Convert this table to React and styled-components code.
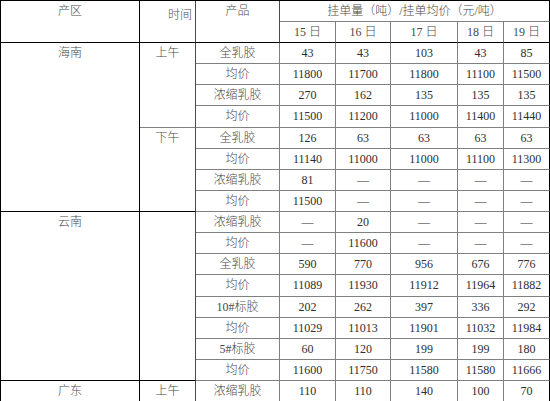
import React from "react";
import styled, { createGlobalStyle, css } from "styled-components";

const BLACK = "#000";
const DARK = "#4a4a4a";
const GRAY = "#808080";

const GlobalStyle = createGlobalStyle`
  html, body { margin: 0; padding: 0; background: #fff; }
  body { font-family: "Liberation Serif", "Noto Sans CJK SC", serif; }
`;

const Table = styled.table`
  border-collapse: separate;
  border-spacing: 0;
  table-layout: fixed;
  width: 550px;
  border-top: 1px solid ${BLACK};
  border-left: 1px solid ${BLACK};
  font-family: "Liberation Serif", "Noto Sans CJK SC", serif;
  font-size: 12px;
  color: #333;
`;

const Col = styled.col`
  width: ${(p) => p.$w}px;
`;

const Row = styled.tr`
  height: ${(p) => p.$h}px;
`;

const cellBase = css`
  padding: 0;
  border-right: 1px solid ${(p) => p.$r || GRAY};
  border-bottom: 1px solid ${(p) => p.$b || GRAY};
  text-align: center;
  vertical-align: middle;
  line-height: 20px;
  white-space: nowrap;
  overflow: hidden;
`;

const cjkText = css`
  color: #4a4a4a;
  font-weight: 300;
`;

const HeadCell = styled.th`
  ${cellBase};
  ${cjkText};
  vertical-align: ${(p) => (p.$top ? "top" : "middle")};
  text-align: ${(p) => p.$align || "center"};
  padding-top: ${(p) => p.$pt || 0}px;
  padding-right: ${(p) => p.$pr || 0}px;
`;

const RegionCell = styled.td`
  ${cellBase};
  ${cjkText};
  vertical-align: top;
`;

const TimeCell = styled.td`
  ${cellBase};
  ${cjkText};
  vertical-align: top;
`;

const ProductCell = styled.td`
  ${cellBase};
  ${cjkText};
`;

const ValueCell = styled.td`
  ${cellBase};
  color: #2e2e2e;
`;

const D = "—";

const regions = [
  {
    name: "海南",
    times: [
      {
        name: "上午",
        rows: [
          ["全乳胶", "43", "43", "103", "43", "85"],
          ["均价", "11800", "11700", "11800", "11100", "11500"],
          ["浓缩乳胶", "270", "162", "135", "135", "135"],
          ["均价", "11500", "11200", "11000", "11400", "11440"],
        ],
      },
      {
        name: "下午",
        rows: [
          ["全乳胶", "126", "63", "63", "63", "63"],
          ["均价", "11140", "11000", "11000", "11100", "11300"],
          ["浓缩乳胶", "81", D, D, D, D],
          ["均价", "11500", D, D, D, D],
        ],
      },
    ],
  },
  {
    name: "云南",
    times: [
      {
        name: "",
        rows: [
          ["浓缩乳胶", D, "20", D, D, D],
          ["均价", D, "11600", D, D, D],
          ["全乳胶", "590", "770", "956", "676", "776"],
          ["均价", "11089", "11930", "11912", "11964", "11882"],
          ["10#标胶", "202", "262", "397", "336", "292"],
          ["均价", "11029", "11013", "11901", "11032", "11984"],
          ["5#标胶", "60", "120", "199", "199", "180"],
          ["均价", "11600", "11750", "11580", "11580", "11666"],
        ],
      },
    ],
  },
  {
    name: "广东",
    times: [
      {
        name: "上午",
        rows: [["浓缩乳胶", "110", "110", "140", "100", "70"]],
      },
    ],
  },
];

const widths = [139, 56, 84, 56, 55, 67, 46, 46];
const days = ["15 日", "16 日", "17 日", "18 日", "19 日"];

function Body() {
  const out = [];
  regions.forEach((region) => {
    const total = region.times.reduce((s, t) => s + t.rows.length, 0);
    region.times.forEach((time, ti) => {
      time.rows.forEach((row, ri) => {
        const firstOfRegion = ti === 0 && ri === 0;
        const lastTime = ti === region.times.length - 1;
        out.push(
          <Row $h={21.125} key={`${region.name}-${ti}-${ri}`}>
            {firstOfRegion && (
              <RegionCell rowSpan={total} $r={BLACK} $b={BLACK}>
                {region.name}
              </RegionCell>
            )}
            {ri === 0 && (
              <TimeCell
                rowSpan={time.rows.length}
                $r={DARK}
                $b={lastTime ? BLACK : GRAY}
              >
                {time.name}
              </TimeCell>
            )}
            <ProductCell>{row[0]}</ProductCell>
            {row.slice(1).map((v, i) => (
              <ValueCell key={i} $r={i === 4 ? BLACK : GRAY}>
                {v}
              </ValueCell>
            ))}
          </Row>
        );
      });
    });
  });
  return <tbody>{out}</tbody>;
}

export default function App() {
  return (
    <>
      <GlobalStyle />
      <Table>
        <colgroup>
          {widths.map((w, i) => (
            <Col key={i} $w={w} />
          ))}
        </colgroup>
        <thead>
          <Row $h={21}>
            <HeadCell rowSpan={2} $top $r={BLACK} $b={BLACK}>
              产区
            </HeadCell>
            <HeadCell rowSpan={2} $top $pt={4} $pr={3} $align="right" $r={DARK} $b={BLACK}>
              时间
            </HeadCell>
            <HeadCell rowSpan={2} $top $r={DARK} $b={BLACK}>
              产品
            </HeadCell>
            <HeadCell colSpan={5} $r={BLACK} $b={GRAY}>
              挂单量（吨）/挂单均价（元/吨）
            </HeadCell>
          </Row>
          <Row $h={21}>
            {days.map((d, i) => (
              <HeadCell key={d} $r={i === 4 ? BLACK : GRAY} $b={BLACK}>
                {d}
              </HeadCell>
            ))}
          </Row>
        </thead>
        <Body />
      </Table>
    </>
  );
}
